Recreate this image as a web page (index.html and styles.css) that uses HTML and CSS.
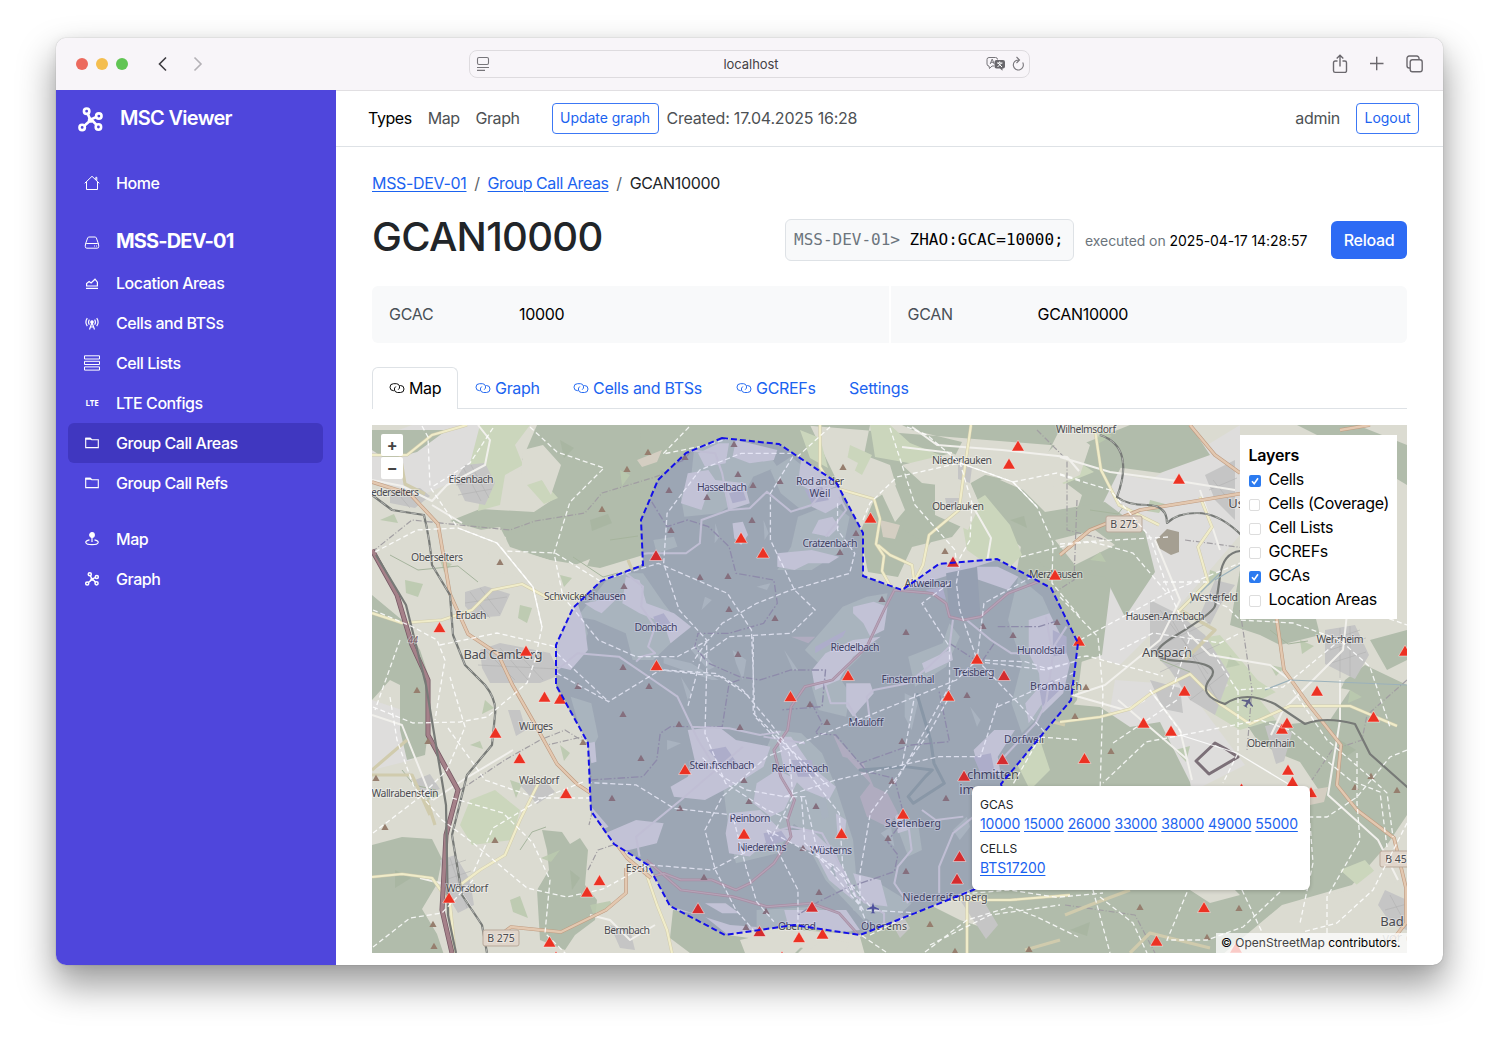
FILE: index.html
```html
<!DOCTYPE html>
<html lang="en">
<head>
<meta charset="utf-8">
<title>MSC Viewer</title>
<link rel="stylesheet" href="styles.css">
</head>
<body>
<svg class="defs" width="0" height="0">
  <defs>
    <symbol id="net" viewBox="0 0 24 24"><g fill="none" stroke="currentColor" stroke-width="2.5"><circle cx="8.3" cy="4" r="2.600"/><circle cx="20" cy="8.7" r="2.600"/><circle cx="4" cy="19.6" r="2.600"/><circle cx="19.6" cy="19.2" r="2.600"/><path d="M9.400 6.600l2 4.600M17.500 9.600l-4 1.800M6.100 17.900l4.600-4M17.800 17.200l-3.900-4"/></g><circle cx="12" cy="12.6" r="2.6" fill="currentColor"/></symbol>
    <symbol id="link" viewBox="0 0 16 16"><g fill="none" stroke="currentColor" stroke-width=".95"><path d="M5.300 10.700H4.500A3.500 3.500 0 0 1 4.500 3.700H7.500A3.300 3.300 0 0 1 9.200 9.700"/><path d="M10.700 5.500H11.500a3.500 3.500 0 0 1 0 7H8.500A3.300 3.300 0 0 1 6.800 6.500"/></g></symbol>
    <symbol id="folder" viewBox="0 0 16 16"><path d="M1.700 12.600V3.200h4.600l1.400 1.500h6.600v7.900z" fill="none" stroke="currentColor" stroke-width="1.100"/><path d="M1.500 2.800h5l1.500 2H1.500z" fill="currentColor"/></symbol>
    <path id="tri" d="M0-5.900L6.400 5H-6.400z"/>
    <path id="peak" d="M0-3.300L3.600 3H-3.600z"/>
    <clipPath id="inside"><path d="M722 438l57 6 57 38 27 51v43l39 14 37-26 58-5 54 29 27 55-7 57-70 84 25 80-53 26-113 45-66-10-69 10-55-29-22-41-34-21-23-33-3-68-32-58v-40l17-37 28-27 42-16-2-45 17-40 28-27z"/></clipPath>
    <clipPath id="outside"><path clip-rule="evenodd" d="M372 425h1035v528H372zM722 438l57 6 57 38 27 51v43l39 14 37-26 58-5 54 29 27 55-7 57-70 84 25 80-53 26-113 45-66-10-69 10-55-29-22-41-34-21-23-33-3-68-32-58v-40l17-37 28-27 42-16-2-45 17-40 28-27z"/></clipPath>
  </defs>
</svg>
<div class="window">
  <header class="titlebar">
    <div class="lights"><i class="red"></i><i class="yellow"></i><i class="green"></i></div>
    <svg class="history" width="48" height="16" viewBox="0 0 48 16" fill="none" stroke-width="1.6"><path d="M10 1.500L3.500 8l6.500 6.500" stroke="#3d3b40"/><path d="M38.500 1.500L45 8l-6.500 6.500" stroke="#b4b1b6"/></svg>
    <div class="address">
      <svg width="14" height="16" viewBox="0 0 14 16" fill="none" stroke="#77757a" stroke-width="1.1"><rect x="1.500" y="1.500" width="11" height="7" rx="1.500"/><path d="M1 11.500h12M1 14.400h8"/></svg>
      <span>localhost</span>
      <div class="address-tools">
        <svg width="20" height="16" viewBox="0 0 20 16"><path d="M3 1.500h6.500a2 2 0 0 1 2 2M3 1.500a2 2 0 0 0-2 2V8a2 2 0 0 0 2 2l.5 2.500L6 10h2" fill="none" stroke="#77757a"/><path d="M4.200 8l2-5 2 5M4.900 6.300h2.700" fill="none" stroke="#77757a"/><path d="M10.500 4h6.500a2 2 0 0 1 2 2v4.500a2 2 0 0 1-2 2h-.5v2.300l-2.500-2.300h-3.500a2 2 0 0 1-2-2V6a2 2 0 0 1 2-2z" fill="#69676c"/><path d="M11 7h5.500M13.700 5.500V7M15.500 7l-4 4M12 7l4 4" stroke="#fff" fill="none"/></svg>
        <svg width="14" height="16" viewBox="0 0 14 16" fill="none" stroke="#77757a" stroke-width="1.100"><path d="M11.700 6.600A5 5 0 1 1 7.500 4M5.500 1l3 3-3 3"/></svg>
      </div>
    </div>
    <svg class="window-tools" width="94" height="22" viewBox="0 0 94 22" fill="none" stroke="#6b686e" stroke-width="1.400"><path d="M6.500 8H4.200A1.700 1.700 0 0 0 2.500 9.700v8A1.700 1.700 0 0 0 4.200 19.400h9.600a1.700 1.700 0 0 0 1.700-1.700v-8A1.700 1.700 0 0 0 13.800 8h-2.300M9 13.500V2.500M5.700 5.500L9 2.200l3.300 3.300M39 10.500h13.500M45.700 3.800v13.500"/><rect x="79.200" y="6.700" width="12" height="12" rx="2.200"/><path d="M79 15h-.8a2.200 2.200 0 0 1-2.200-2.200V5.200A2.200 2.200 0 0 1 78.200 3h7.600a2.200 2.200 0 0 1 2.200 2.200v.8"/></svg>
  </header>
  <div class="app">
    <nav class="sidebar">
      <div class="brand"><svg width="25" height="25"><use href="#net"/></svg><span>MSC Viewer</span></div>
      <a class="item home"><svg width="16" height="16" viewBox="0 0 16 16" fill="none" stroke="currentColor" stroke-width="1"><path d="M.7 8.300L8 1.300l7.300 7M2.500 7v7.500h11V7M11.800 4.500V2.300h1v3.200"/></svg><span>Home</span></a>
      <a class="item node"><svg width="16" height="16" viewBox="0 0 16 16" fill="none" stroke="currentColor" stroke-width="1"><path d="M1.500 10L3.700 3.800A1.500 1.500 0 0 1 5 3h6a1.500 1.500 0 0 1 1.300.8L14.500 10"/><rect x="1.300" y="9.500" width="13.400" height="4.700" rx="1.500"/><path d="M10 12h1M12 12h1"/></svg><span>MSS-DEV-01</span></a>
      <a class="item"><svg width="16" height="16" viewBox="0 0 16 16" fill="none" stroke="currentColor" stroke-width="1.200"><path d="M2 13.400h12M2.600 11V8.500l2.500-2 2 1.500L11 4.200l2.400 3V11z"/></svg><span>Location Areas</span></a>
      <a class="item"><svg width="16" height="16" viewBox="0 0 16 16" fill="none" stroke="currentColor" stroke-width="1.200"><path d="M3.300 3.200a7 7 0 0 0 0 8M12.700 3.200a7 7 0 0 1 0 8M5.400 4.700a4.500 4.500 0 0 0 0 5M10.600 4.700a4.500 4.500 0 0 1 0 5M8 7.500L5.500 14.500M8 7.500l2.500 7M6.500 12h3"/><circle cx="8" cy="7" r="1.200" fill="currentColor"/></svg><span>Cells and BTSs</span></a>
      <a class="item"><svg width="16" height="16" viewBox="0 0 16 16" fill="none" stroke="currentColor" stroke-width="1"><path d="M.5.800h15v3.200H.5zM.5 6.300h15v3.200H.5zM.5 11.900h15v3.200H.5z"/></svg><span>Cell Lists</span></a>
      <a class="item"><b class="lte">LTE</b><span>LTE Configs</span></a>
      <a class="item active"><svg width="16" height="16"><use href="#folder"/></svg><span>Group Call Areas</span></a>
      <a class="item"><svg width="16" height="16"><use href="#folder"/></svg><span>Group Call Refs</span></a>
      <a class="item map-link"><svg width="16" height="16" viewBox="0 0 16 16" fill="none" stroke="currentColor" stroke-width="1.200"><circle cx="8" cy="4" r="2.300" fill="currentColor"/><path d="M8 5v6M5.500 8.800C.200 9.800.200 13.700 8 13.700s7.800-3.900 2.500-4.900"/></svg><span>Map</span></a>
      <a class="item"><svg width="16" height="16" class="small-net"><use href="#net"/></svg><span>Graph</span></a>
    </nav>
    <main>
      <div class="topbar">
        <a class="current">Types</a><a>Map</a><a>Graph</a>
        <button class="outline update">Update graph</button><span class="created">Created: 17.04.2025 16:28</span>
        <span class="user">admin</span><button class="outline logout">Logout</button>
      </div>
      <div class="content">
        <div class="crumbs"><a>MSS-DEV-01</a><i>/</i><a>Group Call Areas</a><i>/</i><span>GCAN10000</span></div>
        <div class="heading">
          <h1>GCAN10000</h1>
          <code><span>MSS-DEV-01&gt;</span> ZHAO:GCAC=10000;</code>
          <p class="executed">executed on <b>2025-04-17 14:28:57</b></p>
          <button class="reload">Reload</button>
        </div>
        <div class="facts"><div><span>GCAC</span><b>10000</b></div><div><span>GCAN</span><b>GCAN10000</b></div></div>
        <div class="tabs">
          <a class="on"><svg width="16" height="16"><use href="#link"/></svg>Map</a>
          <a><svg width="16" height="16"><use href="#link"/></svg>Graph</a>
          <a class="t3"><svg width="16" height="16"><use href="#link"/></svg>Cells and BTSs</a>
          <a class="t4"><svg width="16" height="16"><use href="#link"/></svg>GCREFs</a>
          <a class="t5">Settings</a>
        </div>
        <div class="map">
<svg class="tiles" width="1035" height="528" viewBox="372 425 1035 528">
<rect x="372" y="425" width="1035" height="528" fill="#dbdbd1"/>
<g fill="#dedddc"><path d="M372 440l40-15h90l-20 45-60 25-50-15zM1100 470l50 10 90-55v110l-60 70-60 60-60-20 40-60zM1115 680l70 5 60 80-60 30-30-15-45-70zM372 700l30 10 10 50-40 10z"/></g>
<g fill="#b1bcab">
<path d="M537 425L522 460l18 8 10 20 2 12-18 12-54-3-30 12 28 8 28 8 1 11 43 12 50 8 40-12 40-20 70-40 60-75z"/>
<path d="M640 425h170l53 110v41l39 14 95-30 60 30 27 53-7 57-70 95-27 90-115 50-135-10-60-19-22-42-34-20-23-33-3-70-32-53v-43l17-37 28-27 42-17-2-45z"/>
<path d="M800 425h70l-6 30 26 10 6 20-22 15-14 32 8 40 30 5 14-30 40-10 20-25-14-30-6-20 10-20-50-12-10-5h160l-20 40 40 30-20 60-40-15-10 60 40 25 20 40 30-10 10-80-10-70 20-40-10-15z"/>
<path d="M930 440l24 20-10 60-15 25-25-15-10-40zM965 470l50 12 30 30 60-10 40 30 10 40-30 45-20-40-60-10-60-50zM1130 425h60l20 30-50 18-60-8-20-20zM372 595l30 25 18 30 10 30-20 10-20-10-18 20zM372 430h75l-30 22-30 8-15-10z"/>
<path d="M400 680h28l2 35-5 40-18 5-7-30zM372 845l30-8 30 2 10 20-5 25-15 25 15 25 10 30h-80zM542 830l20 2 8 12 10-6 8 12-3 35 12 15-2 20-20 15-10 15-25-10-3-50 12-20-2-20z"/>
<path d="M673 910l30 5 25 20 35 5 40 8-5 5H690l-20-15zM860 937l113-48 20-90 75-95 32 3 30 20 30-5 15 30 15 30 10 60 60-20 60-30-20-30-25-10-20-15-10-15 40-2 65-30 57 35v90l-20 30-35 40-70 20-60 50H865z"/>
<path d="M1345 680l20-15 42 20v90l-50-15-30-40zM1240 570l40 30 30-5 10 40-40 10-20-10-30-10zM1297 425h60l50 20v40l-50-30zM1370 640l37-10v30l-20 10z"/>
</g>
<g clip-path="url(#outside)">
<g fill="#cbd6bc"><path d="M480 425h50l-15 20 8 20-18 10-5 30-22 6 5-30-15-10zM527 485l15-5 16 18-14 6zM470 800l25-10 25 20-8 30-40 5-12-20zM870 425h20l20 18 30 12-20 10-45-8zM960 510l25-15 25 30 12 30-20 20-35-25zM1220 690l30-15 30 20 10 20-50 15-25-15zM1340 870l25-10 25 30-10 15zM1330 500l40 10-10 30-30-5zM1190 640l30-5 50 60-25 10zM850 445l22 10-10 20-16-10zM1040 470l30-14 24 16-30 12zM1010 750l30-10 10 30-20 20zM800 430l20 8 8 30-18-10z"/></g>
<g fill="#dbdbd1"><path d="M480 530l20-3 10 20 60 20 20-8-5 12-30 15-60-15zM523 450l20-5 18 20-10 30-15-25-15 8zM843 455l15 8-5 12-14-5zM902 465l50-12 40 18-30 17-40-5zM935 480l30-5 15 30-12 25-33-15zM880 490l15-5 10 25-10 12zM1000 480l30-10 40-40 20 15-10 30-45 20zM1055 540l40-10 20 15-40 20zM1260 700l40-20 50 10-20 30-50 5zM1300 900l50-10 25-20 32 20v40l-60 5zM740 940l50-12 20 10-15 15h-50zM825 938l25 5-5 10h-40zM920 900l40-10 25 10 5 30-30-10zM1190 890l40-5 10 10-30 8z"/></g>
<g fill="#d4cec2"><path d="M637 460l25-10-5 12-15 5zM880 520l20 5-5 14-12-2zM1310 790l18-3-4 15-14 3z"/></g>
<g fill="#bac9ae" opacity=".9"><path d="M405 580l18 4-5 13-12-4zM520 605l12 3-5 15-9-5zM510 780l12 4-6 14zM560 850l-9 12-10-4zM430 790l12 6-15 4zM1175 750l15-4-4 16zM1210 570l12 4-14 12zM1330 470l6 13-16-3zM1270 665l14 3-8 8zM1100 430l12 6-16 9zM1150 500l15 4-6 9-12-2zM620 470l10 5-8 11zM510 900l10-4 8 22-15-6zM590 905l20-4 3 5-20 8zM440 560l12 4-8 8zM560 575l12 3-8 9zM485 700l9 8-12 6zM560 745l10 8-6 8zM470 745l10-4 3 8zM380 520l14-6 4 9zM1300 640l14 6-12 8zM1230 655l10 10-14 3zM1090 560l10-8 6 10zM1350 690l12 7-14 6z"/></g>
<g fill="#a4b29d" opacity=".6"><path d="M560 440l14 8-10 10zM590 520l18-6 4 9-20 8zM660 470l10 3-5 18zM1100 840l24-5-10 16zM1180 860l20 8-24 10zM1340 740l16 10-12 8zM1010 520l14-4 3 12zM570 870l10 8-8 12zM395 870l16 8-16 10zM1070 930l20-8-3 14zM1140 800l20-5 4 10z"/></g>
</g>
<path fill="#a59f92" d="M1155 541l12-12 12 3v20l-8 3-14-8z"/>
<g fill="#c5c5c5"><path d="M455 480l10-15 20-2 10 20-10 22-20-4zM390 490l30-2 10 8-15 12-25-5zM465 592l20-6 25 8-10 22-25 2-10-12zM480 650l20-7 50 10 10 22-20 8-50 0-8-15zM508 710l12 0 6 20-10 6zM440 860l15-5 15 25 4 25-16 8-12-20zM520 785l25-5 10 12-18 12zM415 780l15-6 10 15-20 7zM610 925l20 5 5 20-15-2zM958 465l14 2-2 16-12-4zM945 498l16 0-2 12-12-3zM1205 475l30-15v60l-20-20zM1215 580l20 5-15 20-10 20-10-10zM1150 600l30 15 25 20 25 40-15 40-25-15-20-30-20-20zM1325 630l30-5 14 30-14 24-30-15zM1265 726l15-3 12 10-8 28-8 3zM1385 890l22 10v30l-15-5-14-20zM960 900l20-5 18 30-12 14zM1150 680l30 8 3 25-20-4zM890 920l12-6 8 14-10 10z"/></g>
<g fill="none" stroke="#b0b0b0" stroke-width=".7" opacity=".8"><path d="M463 467l18 34M471 465l18 33M456 485l36-6M458 495l34-6M470 592l20 26M480 588l20 26M465 603l42-6M485 650l30 30M500 648l28 32M515 650l28 30M478 665l80 4M442 868l24-8M445 880l26-9M449 892l24-8M450 858l17 50M395 490l15 18M408 488l10 14M1160 610l48 64M1172 620l48 84M1150 650l60-28M1160 672l60-28M1190 700l34-26M1330 640l30-10M1330 650l36-12M1328 664l38-12M1340 628v50M1350 626v50M1390 895l14 26M1385 910l22-6M1213 480l22 28M1209 490l28-12"/></g>
<g clip-path="url(#inside)"><g transform="translate(550 430) scale(.3444 .3333)">
<g fill="#bfcbb6">
<path d="M420 40l80-20 120 30 40 60-70 30-30 60-70 50-100 10-10-60 30-60zM300 330l60-10 10 30-60 20zM640 120l60-40 60 50 30 90-60 20-60-50zM720 260l100-40 50 40-20 100-90 60-100 0 40-70zM180 430l90 0 60 90 60 80-90 90-60 0-20-80-90-40-50-10zM850 530l70-30 60-10-20 100-60 90-60 60 30 50-10 70-80-20-20-70 30-60-50-50zM1360 440l70 60 60 140-30 180-90 90-30-90 30-120-40-130zM1040 680l100-40 20-60 30 40-40 90-90 60zM650 900l80 10 60 60 40 100 50 160 10 120 60 100-40 20-110-120-80-160-80-60-40-100zM500 1050l100-40 80 60 40 90-60 110-120 30-20-90zM20 640l70-90 20 60-20 60-50 30zM60 800l60 20 20 100-30 60zM1000 1170l70 20 10 70-40 20zM860 1340l80 10 110 70-80 80-90-60zM600 1440l180-10 110 60-40 40-250-10z"/></g>
<g fill="#dbdbd1">
<path d="M430 70l60-30 30 0-10 60-60 10zM540 30l120 30-10 30-70 10-50-20zM400 130l60-10 20 30 90 10-10 20-100 0-20 60-60-20zM500 160l70 20 10 40-60 20zM530 280l30-5 15 40-20 30-20-20zM730 80l80 50 20 40-60 20-50-30zM760 190l80-20 10 50-50 30-40-20zM780 270l40-10 20 30-30 30-50-10zM660 370l100-10 80 20-30 20-60 0-40 20-50-10zM20 600l60-80 20 60 10 80-50 60-40-10zM100 520l100-20-50 50-20-10zM220 440l40 10 20 70 80 30 50 40-60 50-20-60-70-30-50-30zM880 530l60-15 40 15-10 70-40 20-20-40-30-30zM800 670l80-40 80-10-80 60-40 70-70 30-10-60zM860 760l70 0 10 30-60 70-20-30zM1080 700l80-40 0-30 10 60-80 40zM1150 410h150l60 30-30 40-140-50zM1390 570l60-20 30 60 30 90-20 90-60 60-10-120-30-60zM1380 820l50-60 20 30-60 90zM400 900l90-10 50 40 100 20-20 60-60 40-110 60-90-10-10-30 50-30 20-50zM600 1060l60-40 60 30-40 90-40 20-50-40zM520 1150l90-10 60 60-90 80-60-10-10-60zM160 1210l90-40 80 10-20 60-80 20-50 0zM120 1130l50 60-20 10-30-30zM660 920l40 0 60 90 70 60-20 40-70-30-60-60zM640 1200l120 0 70 70 50 140-70-60-40-80-90-40zM880 1330l80 20 20 80-70-10zM680 1440l180 0 40 60-200 20zM450 1420l60 0 40 30-50 0zM1230 960l60-60 60 0-50 80 10 60-70-40zM830 1150l30 20-5 60-20-10zM110 940l10 60 15-5-5-60zM1000 1150l30 10 10 40-30 10z"/></g>
<g fill="#c7c3b8"><path d="M860 980l50 20 30 70 40 20 30 60-30 40-60-30-20-60 30-40zM700 620h70l-20 20zM820 910l70 80-40-10z"/></g>
<g fill="#bfcab8"><path d="M450 500l20 10-30 30zM420 640l60 70-20 10-50-60zM330 680l80 20 80 50-20 0-140-50zM530 660l40 30-10 60-20-50zM680 660l40 60-15 0zM480 280l12 40-14 20zM620 270l15 40-12 20zM380 740l30 50-10 20zM600 470l40-10-10 20zM340 930l40 10-40 20zM1030 790l40 20-20 90-20-40zM1220 830l30 40-10 20zM960 1210l30-20 10 60zM820 1300l14 50-20-30zM1170 1200l40-40 10 30-30 40zM780 1110l20-10 10 60-20 10z"/></g>
<g fill="#c4c4c4"><path d="M520 190l40-10 10 30-40 10zM740 180l50-10 20 40-50 10zM300 560l30-10 20 30-40 10zM770 650l90-50-10 20-80 50zM460 960l50-10 40 60-50 0zM1460 600l40 20 0 50-40 10zM1420 770l40-20 20 30-50 50zM700 990l60 0 10 50-50 0zM620 1210l50-10 20 30-60 20zM1230 980l50-10 10 50-40 10zM1090 480l50-10 10 40z"/></g>
<path fill="#a9b4a8" d="M1150 430l90-20 10 150-90 10z"/>
<g fill="none" stroke-linejoin="round">
<g stroke="#9bab9c" stroke-width="9"><path d="M1065 790l40 140 10 70 30 60-90 60-15-20 50-60 20-20-80-10-130 10 40 8"/></g>
<g stroke="#a09da0" stroke-width="4" stroke-dasharray="22 6 5 6"><path d="M410 60l-20 30-140 50 90 150 60-20 60 20 60 60 20 80 110 20 10 70-40 60-100 30h-90l-10 40 40 50 90 40 60 10 90-30h100l-10 110-120 10M550 750l-30 10-20 130-150 0-30 20-10 80-40 50-150 10-10-60M760 820l30 60-20 30 60 5 90 110 80 20 30 120-50 70 30 40-10 50-140 50-80 40-60 40M900 1000l150-55 110-10-30-150M1300 590l120 0 60-20M1160 640l90 60 40-60"/></g>
<g stroke="#d9d7cf" stroke-width="6"><path d="M400 60l80 10 20 60 20 110-80 30-5 70-40 30-110 0-150 20M520 240l60-5 50-50 70 60 60-20 100-130M20 720l60-50 120 10 100 70 70 50 60 130 60 100M410 890l110 5 90 20 60-10M220 430l50 40-5 60 40 60-20 60 20 20-40 10-15 15M560 950l-180 160-130 110 10 60M740 940l-120-20M795 750l20 70 50 0 40 70M930 880l-10-80 20-20 100-20M1170 570l-10 80-60 60-50 40M1210 570l70 60 60 40h110l50-80M1440 560l20 120-20 140-30 60-100 110M1040 1180l10 80-40 50-10 50 40 60M1230 1160l-60 50-40 100 0 80M1080 1140l40 30 80-10M640 1210l60-20 90 20 60 110 40 80 80 50 0 60M840 200l20 40-60 80"/></g>
<g stroke="#bd9f98" stroke-width="8"><path d="M1550 340l-70 90-150 60-80 70-50 10-40-10-10-40-40-30-110-10-30 60-50 110-100 100-80 20-40 60-10 70-40 60 20 80 40 70-20 60 10 50-50 80-70 60-40 20-70-30-90 0-50-20-70 20-20 40M280 1290l100 90 150 20 100 30 130-10 80 30 60 70"/></g>
<g stroke="#cdb8ae" stroke-width="4"><path d="M1550 340l-70 90-150 60-80 70-50 10-40-10-10-40-40-30-110-10-30 60-50 110-100 100-80 20-40 60-10 70-40 60 20 80 40 70-20 60 10 50-50 80-70 60-40 20-70-30-90 0-50-20-70 20-20 40M280 1290l100 90 150 20 100 30 130-10 80 30 60 70"/></g>
</g></g></g>
<g fill="none" stroke-linejoin="round" clip-path="url(#outside)">
<g stroke="#a6b49d" stroke-width="1"><path d="M573 557l30 20 15-4M390 555l28 15 40-4 20 16M402 770l12 15 22 5M520 850l12-18 14-5M610 540l28-4M1090 510l28 4 6-8M1160 660l30 12M1270 630l18 14 20-3M1310 600l20 8"/></g>
<g stroke="#a19ea2" stroke-width="1.200" stroke-dasharray="6 2 1 2"><path d="M372 552l40-32 48 5 50 5 25-9 50-8 17-20 50-15 50-18M460 790l45-30 35-20 25-10 40 25M590 735l-43 10M595 800l-6 25M1037 430l30 30v70l40 10M1077 500l-3 80-40 25M1185 540l60 8M1240 610l12 80-5 60M1407 680l-40 35-5 25-30 10-20 30M1065 905l70 10 20 38M588 870l10-20 30-10"/></g>
<g stroke="#f1f0ec" stroke-width="2"><path d="M372 480l30 6 30 15 15-16 38-20 5-25-12-15M432 505l30 18M372 715l30 10 30 75M433 800l30-20 50-30M420 878l20 5 20 8 12 18M590 915l20 5 20 20 25-15M912 427l25 18 65 5 65 7 12 14M971 503l20 35-5 30M902 447l50 6M1060 457l50 15 75 10 50 8M1200 490l20 60M1155 540l25 60-20 40-55 45-30 10M1190 635l20 20 60 10 20 15M1353 560l-10 90-60 60-12 25M1340 680v40l-12 75 50 45 20 40M1150 690l30 40 12 50M1000 745l20 10M1055 690l70 20 20-10M1118 700l70 60"/></g>
<g stroke="#d0cbad" stroke-width="3.200"><path d="M372 455l35 0 25-20 35-10M400 454l5 30 20 10M372 613l30 10 40-3 30-10 20-20 30-6 28 15 40-5M628 560l5 12 60-20M820 425v42l12 20 42 12 6 20-4 25 8 12-2 15 10 18M971 425l-8 55-4 30-30 25-6 30-8 15M878 545l12 10 22 10 2 15-14 10M540 780l-20 40-15 35-25 15-20 15M427 800l8 25M372 770l35-30M372 877l30-3 30 4 18 25 5 50M645 870l12 35 10 25 5 23M372 775l40 0 18 40M1095 430l6 40 18 35 40 20M1200 497l12 30-14 20 10 35-30 30M1185 660l30-30-35-20M1060 722l40-5 30-8 20-15 40-20 30 30 30 20 40-18 60 0 47 20M960 900l50 0 60-5M1065 915l25-10 40-15M1130 953l20-20 60 15M1000 690l25 25 40 10M967 900v53M1060 940l-35 10"/></g>
<g stroke="#f0ecc9" stroke-width="2.200"><path d="M372 455l35 0 25-20 35-10M372 613l30 10 40-3 30-10 20-20 30-6 28 15 40-5M820 425v42l12 20 42 12 6 20-4 25 8 12-2 15 10 18M971 425l-8 55-4 30-30 25-6 30-8 15M878 545l12 10 22 10 2 15-14 10M540 780l-20 40-15 35-25 15-20 15M372 877l30-3 30 4 18 25 5 50M645 870l12 35 10 25 5 23M1095 430l6 40 18 35 40 20M1200 497l12 30-14 20 10 35-30 30M1060 722l40-5 30-8 20-15 40-20 30 30 30 20 40-18 60 0 47 20M960 900l50 0 60-5M967 900v53"/></g>
<g stroke="#bf9c82" stroke-width="3.600"><path d="M372 482l38 12 28 30 12 70 18 40 30 20 14 30 20 35 25 45 20 20 18 12 4 25 28 37 24 20M626 868l0 25-20 17-45 22-50-5-20 15M1060 555l30-25 50-20 50-8 60-10M1190 425l25 30 25 18M1274 600l10 70 25 35 32 40-4 40 20 25 37 28 12 50v35l-20 25M1340 430l30-5"/></g>
<g stroke="#e3c8b0" stroke-width="2.400"><path d="M372 482l38 12 28 30 12 70 18 40 30 20 14 30 20 35 25 45 20 20 18 12 4 25 28 37 24 20M626 868l0 25-20 17-45 22-50-5-20 15M1060 555l30-25 50-20 50-8 60-10M1190 425l25 30 25 18M1274 600l10 70 25 35 32 40-4 40 20 25 37 28 12 50v35l-20 25M1340 430l30-5"/></g>
<path d="M372 550l25 45 15 50 16 35v55l30 55-12 45-4 75 10 43" stroke="#755864" stroke-width="5"/><path d="M372 550l25 45 15 50 16 35v55l30 55-12 45-4 75 10 43" stroke="#a58189" stroke-width="3.500"/>
<path d="M372 495l20 15 32 5q6 25 8 50l18 30 3 40 12 30 20 20q12 15 10 30l-3 30-25 30-15 60 10 60 20 30 5 28M376 555l30 50 20 80 20 120 2 110 8 38M1100 435q18 6 22 22t-5 40q10 8 30 8t20 18q10-10 30-10t40 18 3 20-20 25-5 30-40 30 5 25 30 18 15 25q20-14 50 0l30 20q20-8 50 0l15 30 45 40" stroke="#777a77" stroke-width="2.200"/>
<path d="M372 495l20 15 32 5q6 25 8 50l18 30 3 40 12 30 20 20q12 15 10 30l-3 30-25 30-15 60 10 60 20 30 5 28M1100 435q18 6 22 22t-5 40q10 8 30 8t20 18q10-10 30-10t40 18" stroke="#c2c3bf" stroke-width=".8" stroke-dasharray="6 5"/>
<path d="M1215 743l-19 18 13 13 29-17-12-8z" stroke="#7c7078" stroke-width="3"/>
<path d="M1220 573l-30 30M1265 690l25-10 117 5M1240 565l-25 15" stroke="#9bb1bb" stroke-width="1.200"/>
</g>
<g fill="#967e6e"><use href="#peak" x="648" y="452"/><use href="#peak" x="627" y="469"/><use href="#peak" x="602" y="509"/><use href="#peak" x="685" y="457"/><use href="#peak" x="669" y="490"/><use href="#peak" x="707" y="497"/><use href="#peak" x="671" y="530"/><use href="#peak" x="500" y="562"/><use href="#peak" x="624" y="586"/><use href="#peak" x="700" y="577"/><use href="#peak" x="728" y="576"/><use href="#peak" x="734" y="444"/><use href="#peak" x="738" y="474"/><use href="#peak" x="753" y="485"/><use href="#peak" x="780" y="481"/><use href="#peak" x="843" y="467"/><use href="#peak" x="752" y="520"/><use href="#peak" x="856" y="533"/><use href="#peak" x="840" y="552"/><use href="#peak" x="945" y="551"/><use href="#peak" x="882" y="599"/><use href="#peak" x="906" y="632"/><use href="#peak" x="729" y="609"/><use href="#peak" x="775" y="618"/><use href="#peak" x="738" y="654"/><use href="#peak" x="1013" y="635"/><use href="#peak" x="1057" y="622"/><use href="#peak" x="983" y="626"/><use href="#peak" x="967" y="695"/><use href="#peak" x="417" y="690"/><use href="#peak" x="428" y="741"/><use href="#peak" x="376" y="778"/><use href="#peak" x="385" y="827"/><use href="#peak" x="495" y="840"/><use href="#peak" x="433" y="924"/><use href="#peak" x="434" y="946"/><use href="#peak" x="578" y="686"/><use href="#peak" x="649" y="686"/><use href="#peak" x="623" y="667"/><use href="#peak" x="623" y="714"/><use href="#peak" x="583" y="742"/><use href="#peak" x="641" y="758"/><use href="#peak" x="612" y="798"/><use href="#peak" x="679" y="724"/><use href="#peak" x="680" y="808"/><use href="#peak" x="704" y="877"/><use href="#peak" x="740" y="727"/><use href="#peak" x="810" y="704"/><use href="#peak" x="827" y="722"/><use href="#peak" x="902" y="741"/><use href="#peak" x="892" y="781"/><use href="#peak" x="946" y="798"/><use href="#peak" x="744" y="780"/><use href="#peak" x="749" y="801"/><use href="#peak" x="816" y="806"/><use href="#peak" x="803" y="848"/><use href="#peak" x="888" y="838"/><use href="#peak" x="906" y="871"/><use href="#peak" x="819" y="892"/><use href="#peak" x="766" y="911"/><use href="#peak" x="746" y="927"/><use href="#peak" x="930" y="924"/><use href="#peak" x="955" y="951"/><use href="#peak" x="1029" y="949"/><use href="#peak" x="1111" y="751"/><use href="#peak" x="1075" y="716"/><use href="#peak" x="1086" y="687"/><use href="#peak" x="1355" y="787"/><use href="#peak" x="1397" y="790"/><use href="#peak" x="1371" y="776"/><use href="#peak" x="1239" y="908"/><use href="#peak" x="1140" y="907"/><use href="#peak" x="1207" y="937"/></g>
<g class="badge"><rect x="483" y="930" width="36" height="16" rx="2"/><rect x="1106" y="516" width="36" height="16" rx="2"/><rect x="1380" y="851" width="36" height="16" rx="2"/></g>
<path d="M0-7l1.500 5 6 3v1.500l-6-1.500-.5 4 2 1.500h-6l2-1.500-.5-4-6 1.500V1l6-3z" transform="translate(1248 702) rotate(30) scale(.85)" fill="#5f6188"/><path d="M0-7l1.500 5 6 3v1.500l-6-1.500-.5 4 2 1.500h-6l2-1.500-.5-4-6 1.500V1l6-3z" transform="translate(873 908) scale(.8)" fill="#5a5c92"/>
<g class="labels">
<text x="1086" y="433" textLength="60">Wilhelmsdorf</text><text x="962" y="464" textLength="60">Niederlauken</text><text x="471" y="483" textLength="45">Eisenbach</text><text x="395" y="496" textLength="48">ederselters</text><text x="722" y="491" textLength="50">Hasselbach</text><text x="820" y="485" textLength="48">Rod an der</text><text x="820" y="497">Weil</text><text x="958" y="510" textLength="52">Oberlauken</text><text x="830" y="547" textLength="55">Cratzenbach</text><text x="437" y="561" textLength="52">Oberselters</text><text x="928" y="587" textLength="47">Altweilnau</text><text x="1056" y="578" textLength="54">Merzhausen</text><text x="585" y="600" textLength="82">Schwickershausen</text><text x="471" y="619" textLength="31">Erbach</text><text x="656" y="631" textLength="43">Dombach</text><text x="855" y="651" textLength="49">Riedelbach</text><text x="1041" y="654" textLength="48">Hunoldstal</text><text x="974" y="676" textLength="41">Treisberg</text><text x="908" y="683" textLength="53">Finsternthal</text><text x="1056" y="690" textLength="52">Brombach</text><text x="866" y="726" textLength="35">Mauloff</text><text x="1024" y="743" textLength="40">Dorfweil</text><text x="536" y="730" textLength="34">Würges</text><text x="539" y="784" textLength="40">Walsdorf</text><text x="405" y="797" textLength="67">Wallrabenstein</text><text x="722" y="769" textLength="65">Steinfischbach</text><text x="800" y="772" textLength="57">Reichenbach</text><text x="750" y="822" textLength="41">Reinborn</text><text x="762" y="851" textLength="49">Niederems</text><text x="831" y="854" textLength="42">Wüstems</text><text x="913" y="827" textLength="56">Seelenberg</text><text x="637" y="872">Esch</text><text x="467" y="892" textLength="42">Wörsdorf</text><text x="627" y="934" textLength="46">Bermbach</text><text x="945" y="901" textLength="85">Niederreifenberg</text><text x="797" y="930" textLength="38">Oberrod</text><text x="884" y="930" textLength="46">Oberems</text><text x="1165" y="620" textLength="79">Hausen-Arnsbach</text><text x="1214" y="601" textLength="48">Westerfeld</text><text x="1340" y="643" textLength="47">Wehrheim</text><text x="1271" y="747" textLength="48">Obernhain</text><text x="501" y="942">B 275</text><text x="1124" y="528">B 275</text><text x="1399" y="863">B 456</text><text x="413" y="643" class="ref">44</text>
<g class="towns"><text x="503" y="659" textLength="79">Bad Camberg</text><text x="1167" y="657" textLength="50">Anspach</text><text x="993" y="779" textLength="52">chmitten</text><text x="967" y="794">im</text><text x="1236" y="508">Us</text><text x="1392" y="926">Bad</text><text x="1398" y="942" opacity=".5">vor d</text></g>
</g>
<path class="area" d="M722 438l57 6 57 38 27 51v43l39 14 37-26 58-5 54 29 27 55-7 57-70 84 25 80-53 26-113 45-66-10-69 10-55-29-22-41-34-21-23-33-3-68-32-58v-40l17-37 28-27 42-16-2-45 17-40 28-27z"/>
<g class="beams" clip-path="url(#outside)"><path d="M422 426l6 11 2 50 28 41 39 15 7 8 51 2 45 28M493 428l-23 35-38 24M530 427l27 25 47 16-34 34-16 51 9 44 37 43 33 18M689 427l-26 27 59-12M375 552l42-22 41-2M503 550l30 37 9 40-7 33-8 23M373 610l40 17 24 13 8 20-10 60M440 645l57-12 60 14M797 457l33-30M890 428l25 77 40 45 5 45M907 427l20 8 33 28 12 40-2 37-13 23M863 520l7-17 27-26 63-14 53 19 24 25 16 36-1 40 28 34M1013 482l44-9 23 7M1168 537l-88 5-60 15M1060 475l50 15 40 47 17 50 23 50-20 60M1060 544l33-2 40 11 34 40M1080 640l87-47 73-30M1163 582h44M1060 597l38 40 5 56-3 100M1120 650l33-17 67 10 20-10M1193 593l34 14 13 13 53 3 47 17 30 27 20 60M1060 660l27-4 76 20M1213 653l24 37 46-3 57-47M1240 575l50 30 60 0 57 20M373 707l40 16 47-1 27-5 40-34M390 697l7 43 17 47 28 33 31 23 54 45 40 9 36-8 44-24M448 728l37 52 52 18h53M452 798l51 15 30 30 17 37-5 53 23 23M373 833l47-36 27-27 18-43-15-50M583 782l-40 16-50 30-20 45M373 947l37-29 32-5 31-33M925 952l42-32 43-13 27 10 41 20M886 952l-28-19M1040 737l40 3M1047 690l-7 47-40 70M1150 690l33 45-37 7-43 41M1113 743l64-43M1238 690v63l-15 30M1183 735l77-15 30 10 60 50 30 12 7 55M1293 690l34 50 43 37 17 16 6 44M1407 750l-17 7-33 40-30 20h-17M1407 823l-34 67-36 33-34 9M1357 753v50l3 37-33 57v36M1310 823l3 40-13 60M1242 890l20 42M1280 892l-37 35-36 13h-40l21-50M1093 890l17 63M1100 897l33 26 14 30M1060 897l43-4M400 640l-25 70M870 935l80-40 60-5 50 8M930 945l60-30 70-10"/><path d="M458 528l39 15 36 44 9 40M1180 735l57 18 53 32M960 463l53 19 24 25" stroke-dasharray="none"/></g>
<g clip-path="url(#inside)"><g class="beams inner" transform="translate(550 430) scale(.3444 .3333)"><path d="M330 70l110-20 80-25M795 0l-90 70-150 0-120 50-95 130-10 150 45 140 80 90 0 90-5 190 60 150 120 80 60 25M705 80l-65 110 0 140 70 150 60 60-70 70-180 10-80 60-40 150M155 450l160-50 200 90 70 110 10 260 100 110 10 130-60 120M835 220l0 80 50 70-15 60-170 50-100 40-100 60-40 50-90 50-120 0-110-50-85-110M20 730l150 85 150-95 180 20 60 40 80 100 110 150 90 120 10 160 70 170M20 670l150 145M330 720l150 10 100 70M590 620l0 230 220 220M1215 190l5 140-50 70M1190 400l-10 60 10 80 50 150 120 130 80 90M1160 460l-80 60 80 130 0 150-60 110-170 240-30 180 0 110M1400 440l-140 80-20 170-60 60-310 130-240 100-130 120-50 100 30 120 60 120 50 60M1240 690l140 5 60 20 128-30M1240 695l200 25 128-40M1300 830l260-120M1060 790l-40 230M1300 820l-50 160-120 0-300 70-150 50-110-20-70-40-60-60M60 1055l190 10 110 70 170 20 40 160 30 100 50 60M730 1100l10 140 110 100 60 100 180 10M630 1200l200 110 100 120M630 1200l90 180 0 120M290 1305l180 15 110-60M680 1100h60l40 180 130 160M1000 1060l30-50 140-260M455 635l-40 60"/></g></g>
<g class="cells"><use href="#tri" x="1018" y="446"/><use href="#tri" x="1009" y="464"/><use href="#tri" x="1179" y="479"/><use href="#tri" x="870.500" y="518"/><use href="#tri" x="741" y="538"/><use href="#tri" x="763" y="553"/><use href="#tri" x="1055" y="575"/><use href="#tri" x="1079" y="641"/><use href="#tri" x="439.500" y="627.500"/><use href="#tri" x="526" y="651"/><use href="#tri" x="977" y="659"/><use href="#tri" x="656.500" y="665.500"/><use href="#tri" x="848" y="675.500"/><use href="#tri" x="1405" y="651"/><use href="#tri" x="544.500" y="697"/><use href="#tri" x="560" y="699"/><use href="#tri" x="790.500" y="696.500"/><use href="#tri" x="948.500" y="696"/><use href="#tri" x="1184.500" y="691"/><use href="#tri" x="1317" y="691"/><use href="#tri" x="1143.500" y="723"/><use href="#tri" x="1171" y="731"/><use href="#tri" x="1282" y="729"/><use href="#tri" x="1287" y="723"/><use href="#tri" x="1373.500" y="717"/><use href="#tri" x="495.500" y="733"/><use href="#tri" x="519.500" y="758.500"/><use href="#tri" x="1084.500" y="758.500"/><use href="#tri" x="685" y="769.500"/><use href="#tri" x="566" y="793.500"/><use href="#tri" x="1288" y="770"/><use href="#tri" x="1292.500" y="782"/><use href="#tri" x="1311" y="792.500"/><use href="#tri" x="1241.500" y="789"/><use href="#tri" x="903" y="814"/><use href="#tri" x="744" y="834"/><use href="#tri" x="841.500" y="833.500"/><use href="#tri" x="599.500" y="880.500"/><use href="#tri" x="587" y="892"/><use href="#tri" x="449" y="898"/><use href="#tri" x="1204" y="907.500"/><use href="#tri" x="799" y="937.500"/><use href="#tri" x="822.500" y="934"/><use href="#tri" x="549.500" y="942"/><use href="#tri" x="1156.500" y="941"/><use href="#tri" x="782" y="957"/><use href="#tri" x="556" y="957"/><use href="#tri" x="1236" y="948"/>
<g fill="#d42c2e"><use href="#tri" x="656" y="555.500"/><use href="#tri" x="953" y="562"/><use href="#tri" x="1004" y="675.500"/><use href="#tri" x="1002.500" y="759.500"/><use href="#tri" x="964" y="776"/><use href="#tri" x="959.500" y="856.500"/><use href="#tri" x="957" y="879"/><use href="#tri" x="698" y="908.500"/><use href="#tri" x="812" y="907"/><use href="#tri" x="759.500" y="931.500"/></g></g>
<path class="outline-area" d="M722 438l57 6 57 38 27 51v43l39 14 37-26 58-5 54 29 27 55-7 57-70 84 25 80-53 26-113 45-66-10-69 10-55-29-22-41-34-21-23-33-3-68-32-58v-40l17-37 28-27 42-16-2-45 17-40 28-27z"/>
</svg>
          <div class="zoom"><button>+</button><button>−</button></div>
          <div class="layers"><b>Layers</b>
            <div class="layer"><i class="checked"><svg viewBox="0 0 12 12"><path d="M3 6.200l2.200 2.600L9 3.200"/></svg></i>Cells</div>
            <div class="layer"><i></i>Cells (Coverage)</div>
            <div class="layer"><i></i>Cell Lists</div>
            <div class="layer"><i></i>GCREFs</div>
            <div class="layer"><i class="checked"><svg viewBox="0 0 12 12"><path d="M3 6.200l2.200 2.600L9 3.200"/></svg></i>GCAs</div>
            <div class="layer"><i></i>Location Areas</div>
          </div>
          <div class="popup"><h6>GCAS</h6><p><a>10000</a><a>15000</a><a>26000</a><a>33000</a><a>38000</a><a>49000</a><a>55000</a></p><h6>CELLS</h6><p><a class="bts">BTS17200</a></p></div>
          <div class="credit">© <span>OpenStreetMap</span> contributors.</div>
        </div>
      </div>
    </main>
  </div>
</div>
</body>
</html>
```
FILE: styles.css
```css
* { box-sizing: border-box; }
body { margin: 0; width: 1499px; height: 1039px; padding: 38px 56px 0; overflow: hidden; background: #fff; font: 16px/24px Inter, "Liberation Sans", sans-serif; letter-spacing: -.3px; color: #212529; }
button { font: inherit; letter-spacing: inherit; padding: 0; cursor: pointer; }
.defs { display: block; }
.window { width: 1387px; height: 927px; border-radius: 10px; overflow: hidden; background: #fff; box-shadow: 0 0 1px rgba(0,0,0,.4), 0 19px 36px 2px rgba(0,0,0,.38), 0 2px 12px rgba(0,0,0,.07); }
.titlebar { height: 53px; background: #f8f5f9; border-bottom: 1px solid #e1dfe2; display: flex; align-items: center; padding: 0 18px 0 20px; }
.lights { display: flex; gap: 8px; width: 80px; }
.lights i { width: 12px; height: 12px; border-radius: 50%; }
.red { background: #ec6a5e; }
.yellow { background: #f4be4f; }
.green { background: #61c554; }
.address { width: 561px; height: 28px; margin-left: 265px; border: 1px solid #dedbdf; border-radius: 8px; display: grid; grid-template-columns: 50px 1fr 49px; align-items: center; padding: 0 4px 0 6px; font-size: 13px; letter-spacing: -.05px; color: #444246; text-align: center; }
.address-tools { display: flex; gap: 5px; justify-content: flex-end; margin-left: -10px; }
.window-tools { margin-left: auto; margin-right: 0; }
.app { display: flex; height: 874px; }
.sidebar { width: 280px; flex: none; margin-top: -1px; background: #4f46dc; color: #fff; padding: 0 13px 0 12px; }
.brand { display: flex; align-items: center; height: 56px; padding-left: 10px; gap: 17px; font-size: 20px; font-weight: 600; letter-spacing: -.7px; }
.brand svg { margin-top: 3px; }
.item { display: flex; align-items: center; gap: 16px; height: 40px; padding-left: 16px; border-radius: 6px; font-weight: 500; letter-spacing: -.45px; }
.item svg { flex: none; }
.small-net { transform: scale(.9); }
.home { margin-top: 17px; }
.node { margin-top: 17px; height: 41px; font-size: 20px; font-weight: 700; letter-spacing: -.85px; }
.node svg { margin-top: 2px; }
.node + .item { margin-top: 2px; }
.active { background: #4037c0; }
.map-link { margin-top: 16px; }
.lte { width: 16px; font: 700 8px/16px "Open Sans", sans-serif; letter-spacing: -.2px; text-align: center; }
main { flex: 1; min-width: 0; }
.topbar { height: 56px; border-bottom: 1px solid #dee2e6; display: flex; align-items: center; padding: 0 24px 0 32px; color: #4d5154; line-height: 22px; }
.topbar a, .topbar span { margin-top: -2px; }
.topbar a { margin-right: 16px; letter-spacing: -.45px; }
.topbar .current { color: #000; }
.outline { height: 31px; margin-top: -1px; border: 1px solid #3c78f5; border-radius: 4px; background: #fff; color: #1b63f0; font-size: 14px; letter-spacing: -.05px; }
.update { width: 107px; margin: -1px 8px 0 16px; }
.logout { width: 63px; margin-left: 16px; }
.created { letter-spacing: -.21px; }
.user { margin-left: auto; }
.content { padding: 24px 36px 0; }
.crumbs { display: flex; gap: 8px; height: 24px; letter-spacing: -.32px; }
.crumbs i { font-style: normal; color: #5c6268; margin: 0 -.2px; }
.crumbs a + i + a { letter-spacing: -.42px; }
.crumbs a, .popup a { color: #1b63f0; text-decoration: underline; text-underline-offset: 2px; text-decoration-thickness: 1px; }
.heading { height: 42px; margin-top: 24px; display: flex; align-items: center; }
h1 { margin: -7px auto 0 0; font-size: 40px; line-height: 48px; font-weight: 500; letter-spacing: -.7px; }
code { width: 289px; height: 42px; border: 1px solid #dee2e6; border-radius: 6px; background: #f8f9fa; padding-left: 8px; font: 16px/40px "DejaVu Sans Mono", monospace; letter-spacing: 0; color: #000; white-space: nowrap; }
code span { color: #6c757d; }
.executed { margin: 2px 0 0 11px; width: 223px; font-size: 14px; letter-spacing: -.07px; color: #6c757d; white-space: nowrap; }
.executed b, .facts b { font-weight: 400; color: #000; }
.reload { width: 76px; height: 38px; margin-left: 23px; border: 0; border-radius: 6px; background: #2e6bf4; color: #fff; font-weight: 500; }
.facts { display: flex; gap: 2px; margin-top: 25px; height: 57px; border-radius: 6px; overflow: hidden; }
.facts div { flex: 1; background: #f8f9fa; display: flex; align-items: center; padding: 0 0 2px 17px; }
.facts span { width: 130px; color: #495057; }
.tabs { display: flex; margin-top: 24px; height: 42px; border-bottom: 1px solid #dee2e6; color: #1b63f0; }
.tabs a { flex: none; height: 42px; display: flex; align-items: center; gap: 4px; padding: 0 17px; width: 98px; }
.tabs svg { flex: none; }
.tabs .on { width: 86px; background: #fff; color: #000; border: 1px solid #dee2e6; border-bottom: 0; border-radius: 6px 6px 0 0; padding: 0 16px 1px; letter-spacing: -.35px; }
.tabs .t3 { width: 163px; }
.tabs .t4 { width: 120px; }
.tabs .t5 { padding-left: 10px; letter-spacing: -.2px; }
.map { position: relative; margin-top: 16px; height: 528px; overflow: hidden; }
.tiles { display: block; }
.area { fill: #0000ff; fill-opacity: .115; }
.outline-area { fill: none; stroke: #1410e8; stroke-width: 2; stroke-dasharray: 6 3; }
.beams { fill: none; stroke: #fff; stroke-opacity: .85; stroke-width: 1.3; stroke-dasharray: 5 3; }
.inner { stroke: #f0f0ff; stroke-opacity: .75; stroke-width: 3.8; stroke-dasharray: 15 8; }
.cells { fill: #ec3223; stroke: #fff; stroke-opacity: .45; stroke-width: 1; }
.badge rect { fill: #e0d5ca; stroke: #b9a99b; }
.labels { font: 10.5px "Noto Sans", sans-serif; letter-spacing: 0; fill: #4c4c50; text-anchor: middle; paint-order: stroke; stroke: #fff; stroke-opacity: .35; stroke-width: 2px; }
.towns { font-size: 13px; }
.ref { font-size: 9px; font-style: italic; fill: #755864; }
.zoom { position: absolute; left: 9px; top: 9px; width: 22px; display: grid; gap: 1px; }
.zoom button { height: 22px; border: 0; border-radius: 2px; background: #fff; font: 700 16px/20px Inter, sans-serif; color: #444; }
.layers { position: absolute; right: 10px; top: 10px; width: 157px; height: 184px; padding: 8px 8px 8px 8.5px; background: #fff; color: #000; white-space: nowrap; letter-spacing: -.35px; }
.layers b { display: block; font-weight: 600; letter-spacing: -.2px; }
.layer { display: flex; align-items: center; gap: 8px; height: 24px; }
.layer i { width: 12px; height: 12px; margin-top: 3px; border: 1px solid #ddd; border-radius: 2px; }
.layer .checked { background: #2c7bf0; border: 0; }
.layer i svg { display: block; fill: none; stroke: #fff; stroke-width: 1.600; }
.popup { position: absolute; left: 600px; top: 361px; width: 338px; height: 104px; padding: 8px; border-radius: 6px; background: #fff; box-shadow: 0 1px 4px rgba(0,0,0,.2); }
.popup h6 { margin: 0; font-size: 12px; line-height: 22px; height: 20px; font-weight: 400; letter-spacing: 0; color: #212529; }
.popup p { display: flex; gap: 4px; margin: 0; height: 24px; line-height: 20px; font-size: 14px; letter-spacing: -.2px; }
.popup .bts { letter-spacing: -.1px; }
.credit { position: absolute; right: 0; bottom: 0; width: 191px; height: 20px; padding-left: 5px; background: rgba(255,255,255,.75); font-size: 12px; line-height: 20px; letter-spacing: 0; color: #000; white-space: nowrap; }
.credit span { color: #444; }
```
